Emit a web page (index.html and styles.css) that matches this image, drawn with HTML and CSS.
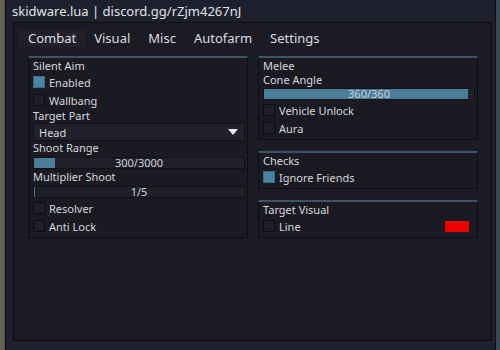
FILE: index.html
```html
<!DOCTYPE html>
<html lang="en">
<head>
  <meta charset="UTF-8">
  <title>skidware.lua</title>
  <link rel="stylesheet" href="styles.css">
</head>
<body>

<div class="window">
  <div class="title">skidware.lua | discord.gg/rZjm4267nJ</div>

  <div class="frame">
    <div class="tabs">
      <div class="tab active">Combat</div>
      <div class="tab">Visual</div>
      <div class="tab">Misc</div>
      <div class="tab">Autofarm</div>
      <div class="tab">Settings</div>
    </div>

    <div class="content">
      <div class="col">
        <div class="panel">
          <div class="ptitle">Silent Aim</div>
          <div class="check"><span class="box on"></span>Enabled</div>
          <div class="check"><span class="box"></span>Wallbang</div>
          <div class="label">Target Part</div>
          <div class="dropdown">
            <span>Head</span>
            <svg width="10" height="6" viewBox="0 0 10 6"><path d="M0 0h10L5 6z" fill="#e8e8ee"/></svg>
          </div>
          <div class="label">Shoot Range</div>
          <div class="slider"><div class="fill" style="width: 10%"></div><span>300/3000</span></div>
          <div class="label">Multiplier Shoot</div>
          <div class="slider"><div class="fill" style="width: 1px"></div><span>1/5</span></div>
          <div class="check"><span class="box"></span>Resolver</div>
          <div class="check"><span class="box"></span>Anti Lock</div>
        </div>
      </div>

      <div class="col">
        <div class="panel">
          <div class="ptitle">Melee</div>
          <div class="label short">Cone Angle</div>
          <div class="slider"><div class="fill" style="width: 97%"></div><span>360/360</span></div>
          <div class="check"><span class="box"></span>Vehicle Unlock</div>
          <div class="check"><span class="box"></span>Aura</div>
        </div>

        <div class="panel">
          <div class="ptitle">Checks</div>
          <div class="check"><span class="box on"></span>Ignore Friends</div>
        </div>

        <div class="panel">
          <div class="ptitle">Target Visual</div>
          <div class="check">
            <span class="box"></span>Line
            <span class="swatch"></span>
          </div>
        </div>
      </div>
    </div>
  </div>
</div>

</body>
</html>
```

FILE: styles.css
```css
html, body {
  margin: 0;
  height: 100%;
  overflow: hidden;
}
body {
  font-family: "Noto Sans", sans-serif;
  background: linear-gradient(90deg, #6b6756 0, #5a5a4c 5px, #3a4654 5px);
  color: #d6d6de;
}
.window {
  margin-left: 5px;
  width: 489px;
  height: 360px;
  background: #1f202e;
  border-left: 1px solid #0f1016;
  border-right: 1px solid #0f1016;
}
.title {
  height: 22px;
  line-height: 22px;
  padding-left: 6px;
  font-size: 13px;
  color: #e2e2ea;
}
.frame {
  margin: 0 3px 0 7px;
  height: 317px;
  background: #1b1b24;
  border: 1px solid #0b0b10;
}
.tabs {
  display: flex;
  margin: 7px 0 0 5px;
}
.tab {
  padding: 0 9px;
  height: 17px;
  line-height: 17px;
  font-size: 13px;
  color: #dcdce4;
}
.tab.active {
  background: #21212b;
}
.content {
  display: grid;
  grid-template-columns: 220px 220px;
  gap: 10px;
  margin: 9px 0 0 14px;
}
.col {
  display: flex;
  flex-direction: column;
  gap: 11px;
}
.panel {
  background: #1a1a22;
  border: 1px solid #0d0d12;
  border-top: 2px solid #3e5366;
  padding: 0 2px 2px 4px;
  font-size: 11px;
}
.ptitle {
  height: 15px;
  line-height: 15px;
}
.label {
  height: 14px;
  line-height: 14px;
}
.label.short {
  height: 13px;
}
.check {
  display: flex;
  align-items: center;
  height: 18px;
}
.box {
  width: 10px;
  height: 10px;
  margin-right: 4px;
  background: #1e1e28;
  border: 1px solid #0c0c11;
}
.box.on {
  background: #4a86a2;
  border-color: #3a6b82;
}
.swatch {
  margin-left: auto;
  margin-right: 6px;
  width: 24px;
  height: 11px;
  background: #ee0000;
}
.dropdown {
  display: flex;
  align-items: center;
  justify-content: space-between;
  height: 16px;
  padding: 0 6px 0 5px;
  background: #21212b;
  border: 1px solid #111118;
}
.slider {
  position: relative;
  height: 10px;
  margin: 2px 0 1px;
  background: #20202a;
  border: 1px solid #111118;
}
.fill {
  height: 100%;
  background: #4a7d97;
}
.slider span {
  position: absolute;
  top: 0;
  left: 0;
  right: 0;
  line-height: 10px;
  text-align: center;
  font-size: 11px;
  color: #cfcfd8;
}
```
